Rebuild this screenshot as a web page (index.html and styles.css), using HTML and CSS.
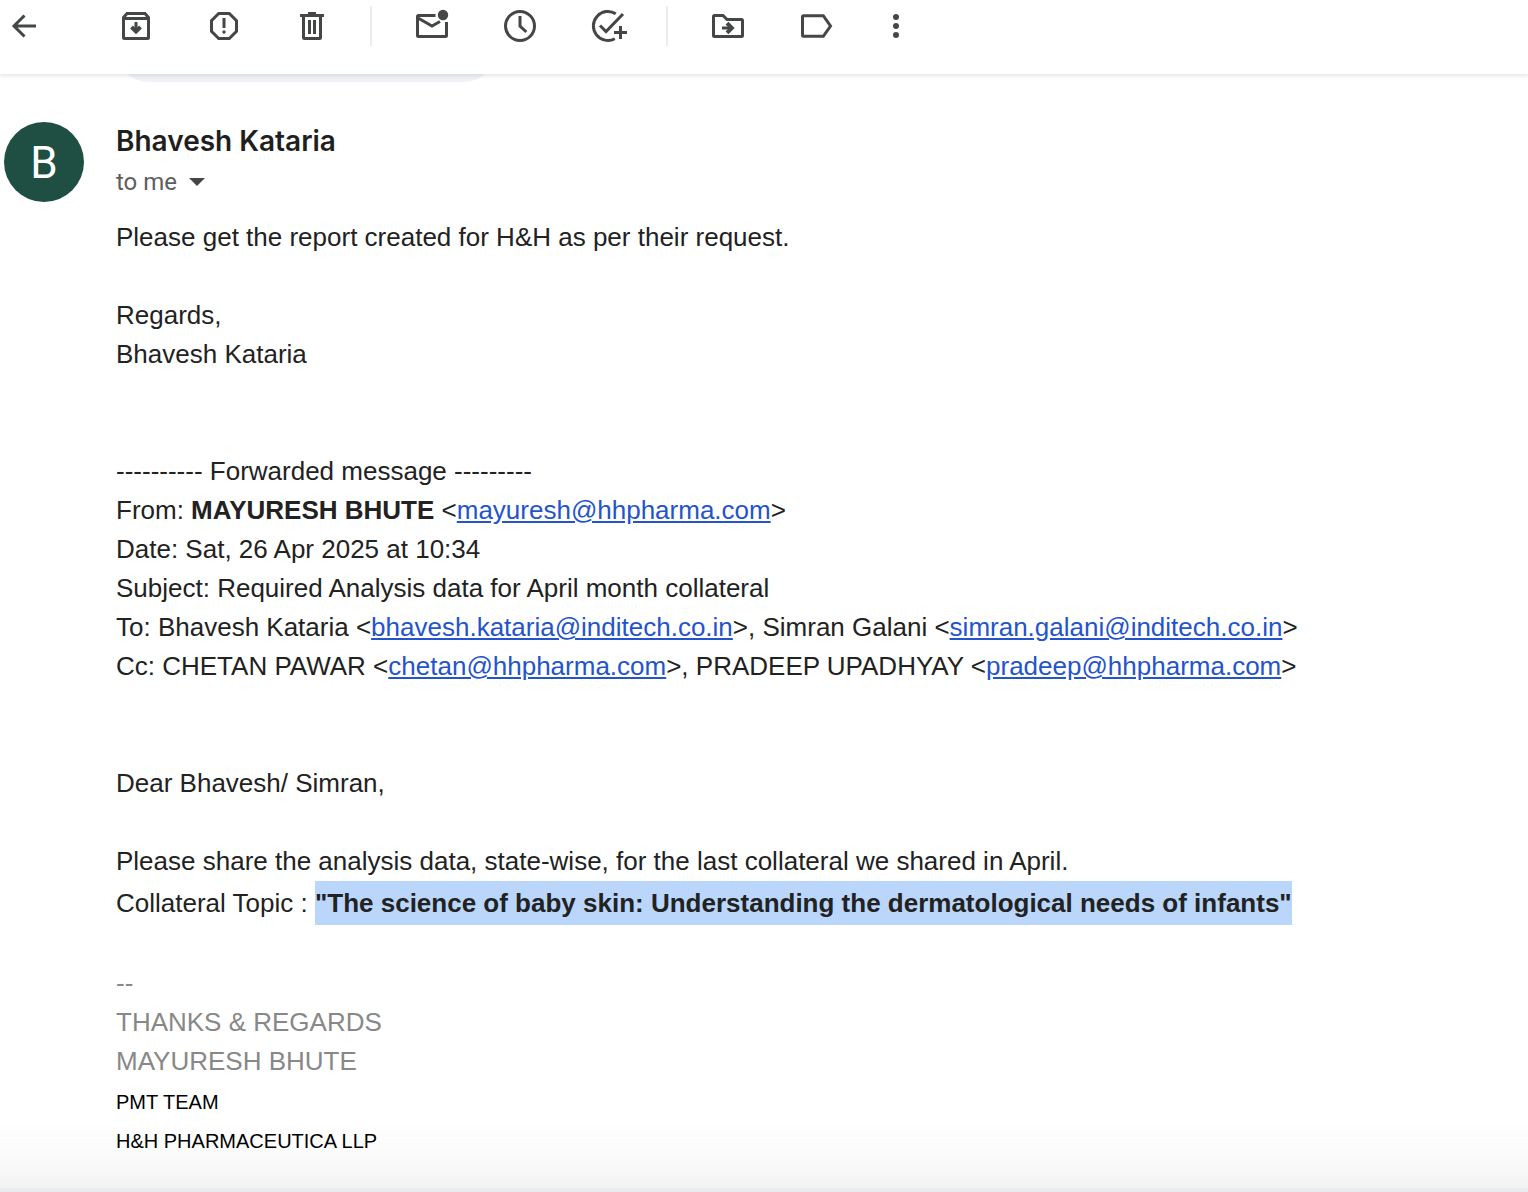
FILE: index.html
```html
<!DOCTYPE html>
<html lang="en">
<head>
<meta charset="utf-8">
<meta name="viewport" content="width=device-width, initial-scale=1">
<title>Required Analysis data for April month collateral</title>
<link rel="stylesheet" href="styles.css">
</head>
<body>
<header class="toolbar">
  <button class="tool tool-back" type="button" aria-label="Back">
    <svg viewBox="0 0 40 40"><path d="M32 20H10M20.500 9.500L10 20l10.500 10.500"/></svg>
  </button>
  <div class="group">
    <button class="tool" type="button" aria-label="Archive">
      <svg viewBox="0 0 40 40"><path d="M7.500 11.500L11 7.500h18l3.500 4v20a1 1 0 0 1-1 1h-23a1 1 0 0 1-1-1zM8 12.500h24M20 16v10"/><path class="bold" d="M15.500 21l4.500 4.500 4.500-4.500"/></svg>
    </button>
    <button class="tool" type="button" aria-label="Report spam">
      <svg viewBox="0 0 40 40"><path d="M14.700 7.500h10.600l7.200 7.200v10.600l-7.200 7.200H14.700l-7.200-7.200V14.700zM20 12v10"/><circle class="solid" cx="20" cy="26" r="1.700"/></svg>
    </button>
    <button class="tool" type="button" aria-label="Delete">
      <svg viewBox="0 0 40 40"><path d="M8 9.500h24M16 7.500h8M11.500 10v21.500a1 1 0 0 0 1 1h15a1 1 0 0 0 1-1V10M17.500 14v14M22.500 14v14"/></svg>
    </button>
  </div>
  <div class="group">
    <button class="tool" type="button" aria-label="Mark as unread">
      <svg viewBox="0 0 40 40"><path d="M23.500 9.500h-17a1 1 0 0 0-1 1v19a1 1 0 0 0 1 1h27a1 1 0 0 0 1-1V16M6 12l14 8 8-4.500"/><circle class="solid" cx="31" cy="9" r="5.200"/></svg>
    </button>
    <button class="tool" type="button" aria-label="Snooze">
      <svg viewBox="0 0 40 40"><circle cx="20" cy="20" r="14.500"/><path d="M20 10v10l6.300 6"/></svg>
    </button>
    <button class="tool" type="button" aria-label="Add to tasks">
      <svg viewBox="0 0 40 40"><path d="M27.800 7.800A14.500 14.500 0 1 0 26.800 32.700M12 19.500l6 6L35 8M32.500 20v13M26 26.500h13"/></svg>
    </button>
  </div>
  <div class="group">
    <button class="tool" type="button" aria-label="Move to">
      <svg viewBox="0 0 40 40"><path d="M6.500 9.500h8.500l4 4h14.500a1 1 0 0 1 1 1v15a1 1 0 0 1-1 1h-27a1 1 0 0 1-1-1v-19a1 1 0 0 1 1-1zM14 22h10"/><path class="bold" d="M19 17.200l4.800 4.800-4.800 4.800"/></svg>
    </button>
    <button class="tool" type="button" aria-label="Labels">
      <svg viewBox="0 0 40 40"><path d="M7.500 9.700h19.800L34.500 20l-7.200 10.300H7.500a1 1 0 0 1-1-1V10.700a1 1 0 0 1 1-1z"/></svg>
    </button>
  </div>
  <button class="tool" type="button" aria-label="More">
    <svg viewBox="0 0 40 40"><g class="solid"><circle cx="20" cy="11" r="3"/><circle cx="20" cy="20" r="3"/><circle cx="20" cy="29" r="3"/></g></svg>
  </button>
</header>
<div class="chip-strip"><div class="chip"></div></div>
<main class="message">
  <div class="avatar">B</div>
  <article class="content">
    <h1 class="sender">Bhavesh Kataria</h1>
    <button class="recipient" type="button">to me <svg class="caret" viewBox="0 0 16 8"><path d="M0 0h16L8 8z"/></svg></button>
    <div class="body">
      <p>Please get the report created for H&amp;H as per their request.</p>
      <p class="spaced">Regards,<br>Bhavesh Kataria</p>
      <p class="section">---------- Forwarded message ---------<br>
        From: <b>MAYURESH BHUTE</b> &lt;<a href="mailto:mayuresh@hhpharma.com">mayuresh@hhpharma.com</a>&gt;<br>
        Date: Sat, 26 Apr 2025 at 10:34<br>
        Subject: Required Analysis data for April month collateral<br>
        To: Bhavesh Kataria &lt;<a href="mailto:bhavesh.kataria@inditech.co.in">bhavesh.kataria@inditech.co.in</a>&gt;, Simran Galani &lt;<a href="mailto:simran.galani@inditech.co.in">simran.galani@inditech.co.in</a>&gt;<br>
        Cc: CHETAN PAWAR &lt;<a href="mailto:chetan@hhpharma.com">chetan@hhpharma.com</a>&gt;, PRADEEP UPADHYAY &lt;<a href="mailto:pradeep@hhpharma.com">pradeep@hhpharma.com</a>&gt;</p>
      <p class="section">Dear Bhavesh/ Simran,</p>
      <p class="spaced">Please share the analysis data, state-wise, for the last collateral we shared in April.</p>
      <p class="topic">Collateral Topic : <mark>"The science of baby skin: Understanding the dermatological needs of infants"</mark></p>
      <p class="signature spaced">--<br>THANKS &amp; REGARDS<br>MAYURESH BHUTE</p>
      <p><small>PMT TEAM</small><br><small>H&amp;H PHARMACEUTICA LLP</small></p>
    </div>
  </article>
</main>
<footer class="fade"></footer>
</body>
</html>
```
FILE: styles.css
```css
* { box-sizing: border-box; }

body {
  margin: 0;
  min-height: 100vh;
  display: flex;
  flex-direction: column;
  background: #fff;
  color: #222;
  font-family: "Liberation Sans", Arial, sans-serif;
  font-size: 26px;
  line-height: 39px;
}

button {
  padding: 0;
  border: 0;
  background: none;
  font: inherit;
  color: inherit;
  cursor: pointer;
}

.toolbar {
  position: relative;
  z-index: 1;
  display: flex;
  align-items: flex-start;
  height: 74px;
  padding: 6px 4px;
  background: #fff;
  box-shadow: 0 2px 4px rgba(0, 0, 0, 0.1);
}

.group {
  display: flex;
  gap: 48px;
  padding-right: 38px;
  margin-right: 40px;
  border-right: 2px solid #ececec;
}

.group:last-of-type {
  padding-right: 0;
  border-right: 0;
}

.tool { width: 40px; height: 40px; }
.tool-back { margin-right: 72px; }

.tool svg {
  display: block;
  width: 40px;
  height: 40px;
  fill: none;
  stroke: #444746;
  stroke-width: 3;
}

.tool .bold { stroke-width: 4; }
.tool .solid { fill: #444746; stroke: none; }

.chip-strip {
  display: flex;
  align-items: flex-end;
  height: 8px;
  overflow: hidden;
  padding-left: 116px;
}

.chip {
  flex: none;
  width: 380px;
  height: 64px;
  border-radius: 32px;
  background: #eff3f8;
}

.message {
  display: flex;
  gap: 32px;
  padding: 40px 4px 0;
}

.avatar {
  flex: none;
  width: 80px;
  height: 80px;
  border-radius: 50%;
  background: #1f4e43;
  color: #fff;
  font: 44px/82px Roboto, sans-serif;
  text-align: center;
}

.sender {
  margin: 0;
  font: 600 28px/39px Inter, sans-serif;
  color: #1f1f1f;
}

.recipient {
  display: flex;
  align-items: center;
  gap: 12px;
  font: 24px/42px Roboto, sans-serif;
  color: #5e5e5e;
}

.caret { width: 16px; height: 8px; fill: #444746; }

.body { padding-top: 15px; }
.body p { margin: 0; }
.body .spaced { margin-top: 39px; }
.body .section { margin-top: 78px; }
.body a { color: #2454cb; }

.topic { line-height: 44px; }
.topic mark { display: inline-block; background: #bad6fb; color: inherit; font-weight: bold; }

.signature { color: #888; }
.body small { color: #000; font-size: 20px; line-height: 20px; }

.fade {
  flex: 1 0 32px;
  margin-top: -40px;
  border-bottom: 4px solid #e9ebee;
  background: linear-gradient(rgba(0, 0, 0, 0), rgba(0, 0, 0, 0.02) 60%, rgba(0, 0, 0, 0.05));
}
```
